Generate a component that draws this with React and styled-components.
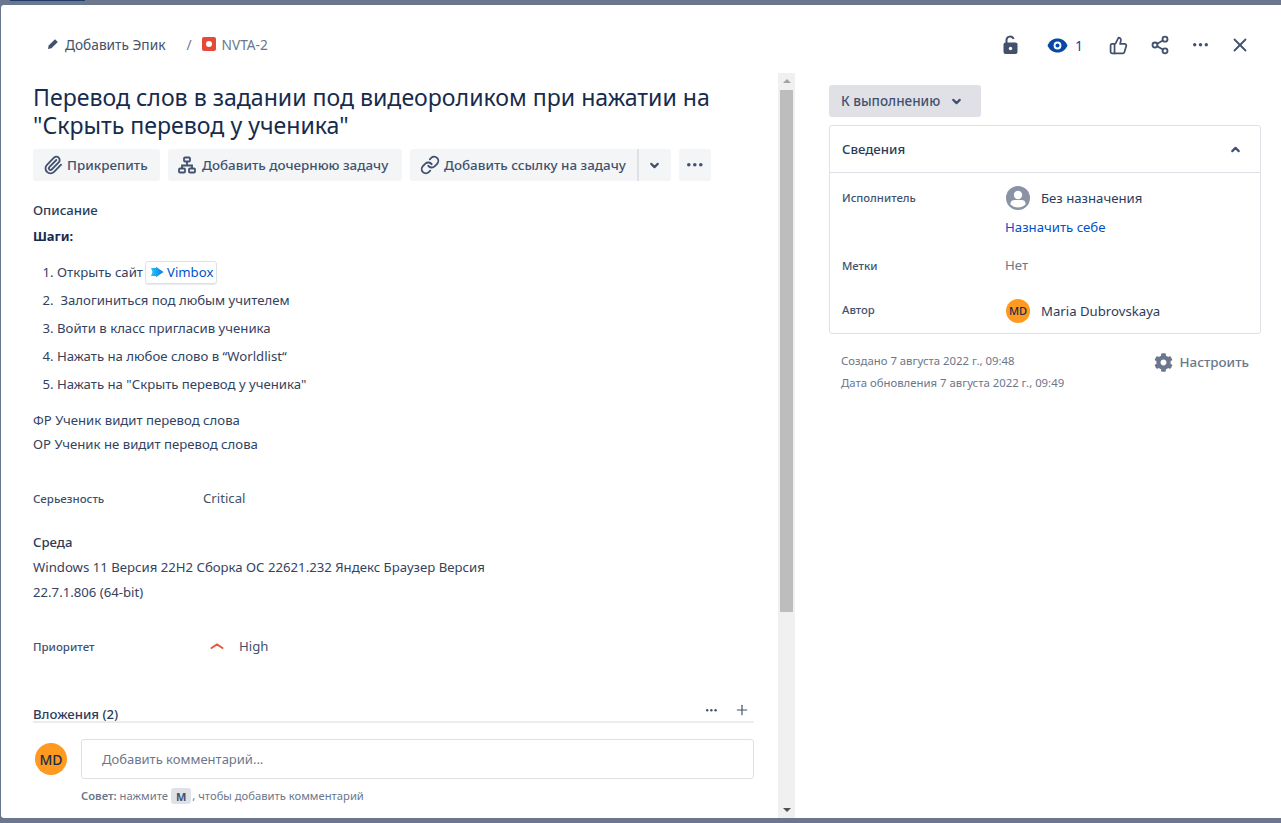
import React from 'react';
import styled, { createGlobalStyle } from 'styled-components';
import { Paperclip, Link, ThumbsUp, Share2, X, ChevronDown, ChevronUp, Plus } from 'lucide-react';
import { FaCog } from 'react-icons/fa';

const Global = createGlobalStyle`
  html, body { margin: 0; padding: 0; height: 100%; overflow: hidden; }
  body { font-family: "Noto Sans", "Open Sans", sans-serif; color: #172b4d; font-size: 13.18px; }
  * { box-sizing: border-box; }
`;

const Page = styled.div`
  width: 1281px; height: 823px; padding: 5px 0 5px 1px; display: flex;
  background: linear-gradient(#1f3a6b, #1f3a6b) 10px 0 / 75px 1px no-repeat, #6b778c;
`;
const Modal = styled.div`
  flex: 1; background: #fff; border-radius: 3px 0 0 3px; display: flex; flex-direction: column; min-width: 0;
`;
const Header = styled.header`
  height: 68px; flex: none; display: flex; align-items: center; justify-content: space-between;
  padding: 10px 29px 0 46px;
`;
const Crumbs = styled.nav`display: flex; align-items: center; color: #42526e; font-size: 13.7px;`;
const EpicLink = styled.span`display: flex; align-items: center; gap: 6px;`;
const Slash = styled.span`margin: 0 10px 0 21px; color: #6b778c;`;
const IssueKey = styled.span`display: flex; align-items: center; gap: 6px; color: #6b778c;`;
const BugIcon = styled.span`
  width: 14px; height: 14px; border-radius: 2px; background: #e5493a; display: flex; align-items: center; justify-content: center;
  &::after { content: ""; width: 6px; height: 6px; border-radius: 50%; background: #fff; }
`;
const HeaderActions = styled.div`display: flex; align-items: center; color: #42526e; margin-top: 2px;`;
const HeaderIcon = styled.span`display: flex; align-items: center; justify-content: center; width: ${p => p.$w || 24}px; margin-left: ${p => p.$ml || 0}px; color: ${p => p.$color || '#42526e'};`;
const WatchCount = styled.span`color: #0747a6; font-size: 14px; margin-left: 5px;`;

const Body = styled.div`flex: 1; display: flex; min-height: 0;`;
const MainPane = styled.div`width: 794px; flex: none; display: flex; min-height: 0;`;
const MainColumn = styled.div`width: 777px; flex: none; display: flex; flex-direction: column; padding: 0 24px 0 32px; overflow: hidden;`;
const Scrollbar = styled.div`
  width: 17px; flex: none; background: #f0f0f0; display: flex; flex-direction: column; align-items: center; justify-content: space-between; position: relative;
`;
const Arrow = styled.span`
  width: 0; height: 0; border-left: 4px solid transparent; border-right: 4px solid transparent; margin: 6px 0;
  ${p => p.$up ? 'border-bottom: 4px solid #a3a3a3;' : 'border-top: 4px solid #505050;'}
`;
const Thumb = styled.span`
  position: absolute; left: 2px; top: 17px; width: 13px; height: 522px; background: #bdbdbd;
`;

const Title = styled.h1`
  margin: 10px 0 0; font-size: 23.1px; line-height: 28px; font-weight: 400; color: #172b4d; height: 56px; white-space: nowrap;
`;
const Toolbar = styled.div`display: flex; margin-top: 10px; gap: 8px;`;
const ToolButton = styled.button`
  height: 32px; border: none; border-radius: 3px; background: #f4f5f7; color: #42526e; font: 500 13.4px "Noto Sans", sans-serif;
  display: flex; align-items: center; gap: ${p => p.$gap || 4}px; padding: 0 0 0 10px; white-space: nowrap; width: ${p => p.$w}px; flex: none;
`;
const SplitGroup = styled.div`display: flex; width: 261px; flex: none; border-radius: 3px; overflow: hidden;`;
const SplitMain = styled(ToolButton)`border-radius: 0; width: 229px; border-right: 2px solid #dfe1e6;`;
const SplitCaret = styled(ToolButton)`border-radius: 0; flex: 1; width: auto; justify-content: center; padding: 0 2px 0 0;`;
const MoreButton = styled(ToolButton)`justify-content: center; padding: 0;`;

const SectionHead = styled.h2`margin: ${p => p.$mt}px 0 0; font-size: 13.18px; line-height: 20px; font-weight: 500; color: #2b3c5a;`;
const Para = styled.p`margin: ${p => p.$mt || 0}px 0 0; line-height: ${p => p.$lh || 24}px; font-size: 13.18px; color: #33435f;`;
const StepsTitle = styled.p`margin: 6px 0 0; font-weight: 700; font-size: 13px; line-height: 20px;`;
const Steps = styled.ol`margin: 12px 0 0; padding: 0 0 0 24px; color: #33435f;`;
const Step = styled.li`height: 28px; line-height: 28px; font-size: 13.18px;`;
const SmartLink = styled.span`
  display: inline-flex; align-items: center; gap: 3px; height: 23px; padding: 0 3px 0 4px; vertical-align: middle; margin-left: 2px; position: relative; top: -1px;
  border: 1px solid #dfe1e6; border-radius: 3px; color: #0052cc; box-shadow: 0 1px 1px rgba(9,30,66,.1); line-height: 20px;
`;
const FieldRow = styled.div`display: flex; align-items: center; height: 20px; margin-top: ${p => p.$mt}px;`;
const FieldLabel = styled.span`width: 170px; flex: none; font-size: 11.5px; font-weight: 500; color: #42526e;`;
const FieldValue = styled.span`display: flex; align-items: center; gap: 15px; font-size: 13.18px; color: #42526e;`;
const PriorityMark = styled.span`display: flex; margin-left: 7px;`;

const AttachHead = styled.div`display: flex; align-items: center; justify-content: space-between; height: 24px; margin-top: 43px; border-bottom: 2px solid #ebecf0; flex: none; padding-right: 4px;`;
const AttachTitle = styled.span`font-size: 13.18px; font-weight: 500; color: #2b3c5a; line-height: 22px; position: relative; top: 4px;`;
const AttachTools = styled.span`display: flex; align-items: center; gap: 16px; color: #42526e;`;
const CommentBar = styled.div`display: flex; gap: 14px; margin-top: 16px; padding-left: 2px; align-items: flex-start;`;
const Avatar = styled.span`
  width: ${p => p.$s}px; height: ${p => p.$s}px; flex: none; border-radius: 50%; background: #ff991f; color: #172b4d; display: flex; align-items: center; justify-content: center;
  font-size: ${p => p.$f}px; font-weight: 500;
`;
const CommentAvatar = styled(Avatar)`margin-top: 4px;`;
const CommentCol = styled.div`flex: 1; min-width: 0;`;
const CommentInput = styled.div`height: 40px; border: 1px solid #dfe1e6; border-radius: 3px; display: flex; align-items: center; padding-left: 20px; color: #6b778c; font-size: 13px;`;
const Tip = styled.p`margin: 8px 0 0; font-size: 11.24px; line-height: 18px; color: #6b778c; display: flex; align-items: center;`;
const TipStrong = styled.strong`font-weight: 600; margin-right: 3px;`;
const Key = styled.kbd`font: 700 11px "Noto Sans", sans-serif; background: #dfe1e6; color: #42526e; border-radius: 3px; height: 16px; padding: 0 5px; margin: 0 1px 0 3px; display: inline-flex; align-items: center;`;

const Side = styled.aside`flex: 1; padding: 12px 20px 0 34px; min-width: 0;`;
const StatusButton = styled.button`
  height: 32px; width: 152px; border: none; border-radius: 3px; background: #dfe1e6; color: #42526e; font: 500 13.5px "Noto Sans", sans-serif;
  display: flex; align-items: center; gap: 10px; padding: 0 12px;
`;
const DetailsCard = styled.section`margin-top: 8px; border: 1px solid #dfe1e6; border-radius: 3px; height: 209px;`;
const DetailsHead = styled.div`height: 47px; padding: 0 18px 0 12px; display: flex; align-items: center; justify-content: space-between; border-bottom: 1px solid #dfe1e6; font-weight: 500; color: #2b3c5a;`;
const DetailRow = styled.div`display: flex; padding: 0 12px; margin-top: ${p => p.$mt}px;`;
const DetailLabel = styled.span`width: 163px; flex: none; font-size: 11.3px; font-weight: 500; color: #42526e; line-height: ${p => p.$lh || 20}px;`;
const DetailValue = styled.div`font-size: 13.18px; color: ${p => p.$muted ? '#6b778c' : '#42526e'}; line-height: 20px;`;
const WithAvatar = styled.div`display: flex; align-items: center; gap: 11px; color: #2b3c5a; margin-left: 1px;`;
const AssignLink = styled.a`display: block; margin-top: 7px; color: #0052cc; text-decoration: none; font-size: 13.2px;`;
const MetaRow = styled.div`display: flex; justify-content: space-between; padding: 16px 12px 0 12px;`;
const Dates = styled.div`font-size: 11.35px; line-height: 22px; color: #6b778c;`;
const Configure = styled.span`display: flex; align-items: center; gap: 7px; font-weight: 500; color: #6b778c; font-size: 13.4px; height: 24px;`;

const Hierarchy = () => (
  <svg width="18" height="18" viewBox="0 0 18 18" fill="none" stroke="currentColor" strokeWidth="1.8">
    <rect x="6" y="1.5" width="6" height="4" rx="1" />
    <rect x="1" y="12.5" width="6" height="4" rx="1" />
    <rect x="11" y="12.5" width="6" height="4" rx="1" />
    <path d="M9 5.500v4M4 12.500V9.500h10v3" />
  </svg>
);
const Pencil = () => (
  <svg width="12" height="12" viewBox="0 0 12 12" fill="#42526e"><path d="M8 1.200l2.800 2.800-6.300 6.300L1 11l.7-3.500z" /></svg>
);
const Dots = ({ r = 1.7, gap = 5.8, color = 'currentColor' }) => (
  <svg width={gap * 2 + r * 2 + 2} height={r * 2 + 2} fill={color}>
    {[0, 1, 2].map(i => <circle key={i} cx={r + 1 + i * gap} cy={r + 1} r={r} />)}
  </svg>
);
const LockOpen = () => (
  <svg width="16" height="20" viewBox="0 0 16 20">
    <path d="M4.500 8V5.200a3.600 3.600 0 0 1 7-1.200" fill="none" stroke="#42526e" strokeWidth="2" />
    <rect x="1.500" y="7.500" width="14" height="11.500" rx="2" fill="#42526e" />
    <circle cx="8.500" cy="13.500" r="1.700" fill="#fff" />
  </svg>
);
const Eye = () => (
  <svg width="21" height="15" viewBox="0 0 21 15">
    <path d="M.5 7.500C2.500 3 6 .5 10.500.5s8 2.500 10 7c-2 4.500-5.500 7-10 7s-8-2.500-10-7z" fill="#0747a6" />
    <circle cx="10.500" cy="7.500" r="3.900" fill="#fff" />
    <circle cx="10.500" cy="7.500" r="2" fill="#0747a6" />
  </svg>
);
const Person = () => (
  <svg width="24" height="24" viewBox="0 0 24 24">
    <circle cx="12" cy="12" r="12" fill="#8993a4" />
    <circle cx="12" cy="9" r="4.200" fill="#fff" />
    <path d="M4.500 18.500v-1c0-2.500 2-3.500 4-3.500h7c2 0 4 1 4 3.500v1c-2 2-4.500 3-7.500 3s-5.500-1-7.500-3z" fill="#fff" />
  </svg>
);
const VimboxLogo = () => (
  <svg width="14" height="12" viewBox="0 0 14 12">
    <defs>
      <linearGradient id="vb" x1="0" x2="1">
        <stop offset="0" stopColor="#25c4f5" />
        <stop offset="1" stopColor="#0a7be8" />
      </linearGradient>
    </defs>
    <path d="M1 2h5V.8L13.500 6 6 11.200V10H1l1.500-4z" fill="url(#vb)" />
  </svg>
);
const PriorityHigh = () => (
  <svg width="14" height="8" viewBox="0 0 14 8" fill="none" stroke="#e5573f" strokeWidth="2" strokeLinecap="round">
    <path d="M1.500 6L7 2.500 12.500 6" />
  </svg>
);

export default function App() {
  return (
    <>
      <Global />
      <Page>
        <Modal>
          <Header>
            <Crumbs>
              <EpicLink><Pencil />Добавить Эпик</EpicLink>
              <Slash>/</Slash>
              <IssueKey><BugIcon />NVTA-2</IssueKey>
            </Crumbs>
            <HeaderActions>
              <HeaderIcon><LockOpen /></HeaderIcon>
              <HeaderIcon $w={24} $ml={24}><Eye /></HeaderIcon>
              <WatchCount>1</WatchCount>
              <HeaderIcon $ml={23}><ThumbsUp size={19} strokeWidth={2.2} /></HeaderIcon>
              <HeaderIcon $ml={18}><Share2 size={20} strokeWidth={2.2} /></HeaderIcon>
              <HeaderIcon $ml={16}><Dots /></HeaderIcon>
              <HeaderIcon $ml={16}><X size={22} strokeWidth={2} /></HeaderIcon>
            </HeaderActions>
          </Header>
          <Body>
            <MainPane>
              <MainColumn>
                <Title>Перевод слов в задании под видеороликом при нажатии на<br />"Скрыть перевод у ученика"</Title>
                <Toolbar>
                  <ToolButton $w={127}><Paperclip size={20} strokeWidth={2.2} />Прикрепить</ToolButton>
                  <ToolButton $w={234} $gap={6}><Hierarchy />Добавить дочернюю задачу</ToolButton>
                  <SplitGroup>
                    <SplitMain><Link size={20} strokeWidth={2.2} />Добавить ссылку на задачу</SplitMain>
                    <SplitCaret><ChevronDown size={13} strokeWidth={4} /></SplitCaret>
                  </SplitGroup>
                  <MoreButton $w={32}><Dots r={1.8} gap={6} /></MoreButton>
                </Toolbar>
                <SectionHead $mt={19}>Описание</SectionHead>
                <StepsTitle>Шаги:</StepsTitle>
                <Steps>
                  <Step>Открыть сайт<SmartLink><VimboxLogo />Vimbox</SmartLink></Step>
                  <Step>&nbsp;Залогиниться под любым учителем</Step>
                  <Step>Войти в класс пригласив ученика</Step>
                  <Step>Нажать на любое слово в “Worldlist“</Step>
                  <Step>Нажать на "Скрыть перевод у ученика"</Step>
                </Steps>
                <Para $mt={10}>ФР Ученик видит перевод слова</Para>
                <Para>ОР Ученик не видит перевод слова</Para>
                <FieldRow $mt={32}><FieldLabel>Серьезность</FieldLabel><FieldValue>Critical</FieldValue></FieldRow>
                <SectionHead $mt={24}>Среда</SectionHead>
                <Para $mt={3} $lh={25}>Windows 11 Версия 22H2 Сборка ОС 22621.232 Яндекс Браузер Версия<br />22.7.1.806 (64-bit)</Para>
                <FieldRow $mt={31}><FieldLabel>Приоритет</FieldLabel><FieldValue><PriorityMark><PriorityHigh /></PriorityMark>High</FieldValue></FieldRow>
                <AttachHead>
                  <AttachTitle>Вложения (2)</AttachTitle>
                  <AttachTools><Dots r={1.2} gap={4.2} /><Plus size={16} strokeWidth={1.8} /></AttachTools>
                </AttachHead>
                <CommentBar>
                  <CommentAvatar $s={32} $f={14}>MD</CommentAvatar>
                  <CommentCol>
                    <CommentInput>Добавить комментарий...</CommentInput>
                    <Tip><TipStrong>Совет:</TipStrong> нажмите <Key>M</Key>, чтобы добавить комментарий</Tip>
                  </CommentCol>
                </CommentBar>
              </MainColumn>
              <Scrollbar>
                <Arrow $up />
                <Thumb />
                <Arrow />
              </Scrollbar>
            </MainPane>
            <Side>
              <StatusButton>К выполнению <ChevronDown size={13} strokeWidth={4} /></StatusButton>
              <DetailsCard>
                <DetailsHead>Сведения <ChevronUp size={13} strokeWidth={4} color="#42526e" /></DetailsHead>
                <DetailRow $mt={13}>
                  <DetailLabel $lh={24}>Исполнитель</DetailLabel>
                  <DetailValue>
                    <WithAvatar><Person />Без назначения</WithAvatar>
                    <AssignLink>Назначить себе</AssignLink>
                  </DetailValue>
                </DetailRow>
                <DetailRow $mt={18}><DetailLabel $lh={22}>Метки</DetailLabel><DetailValue $muted>Нет</DetailValue></DetailRow>
                <DetailRow $mt={22}>
                  <DetailLabel $lh={22}>Автор</DetailLabel>
                  <DetailValue><WithAvatar><Avatar $s={24} $f={11}>MD</Avatar>Maria Dubrovskaya</WithAvatar></DetailValue>
                </DetailRow>
              </DetailsCard>
              <MetaRow>
                <Dates>Создано 7 августа 2022 г., 09:48<br />Дата обновления 7 августа 2022 г., 09:49</Dates>
                <Configure><FaCog size={19} />Настроить</Configure>
              </MetaRow>
            </Side>
          </Body>
        </Modal>
      </Page>
    </>
  );
}
